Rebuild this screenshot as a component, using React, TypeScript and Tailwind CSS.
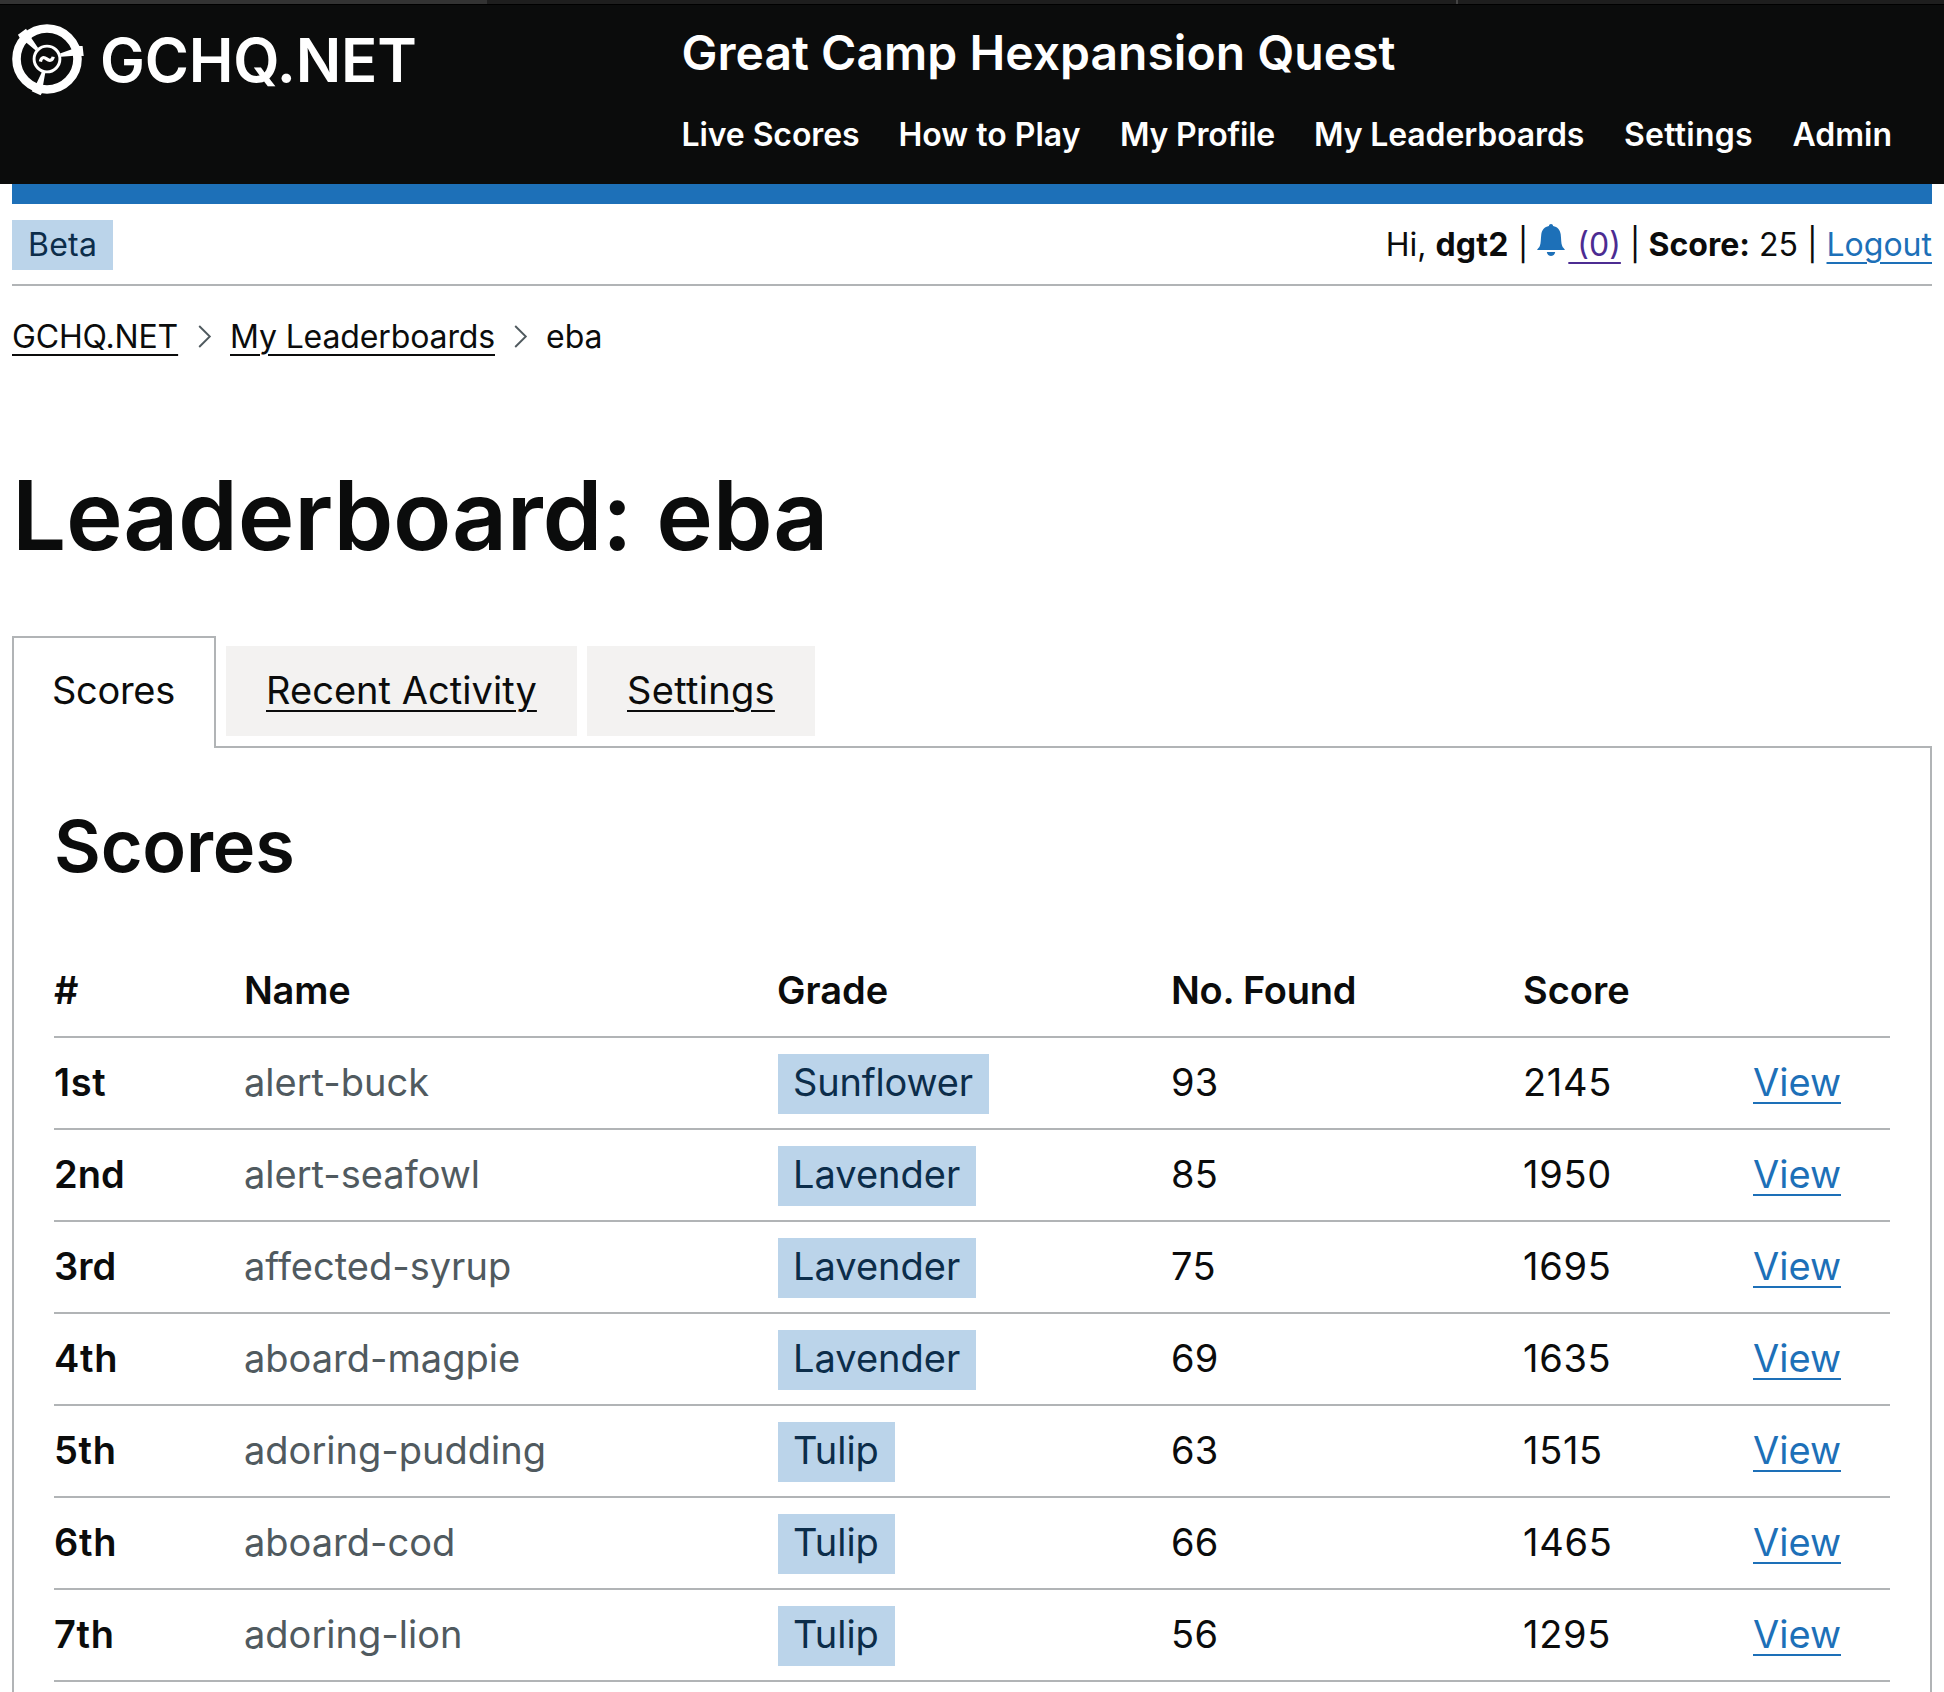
const nav = [
  ["Live Scores", "tracking-[-0.1px]"],
  ["How to Play", ""],
  ["My Profile", "tracking-[-0.2px]"],
  ["My Leaderboards", "tracking-[-0.13px]"],
  ["Settings", "tracking-[0.25px]"],
  ["Admin", ""],
];

const rows = [
  ["1st", "alert-buck", "Sunflower", "93", "2145"],
  ["2nd", "alert-seafowl", "Lavender", "85", "1950"],
  ["3rd", "affected-syrup", "Lavender", "75", "1695"],
  ["4th", "aboard-magpie", "Lavender", "69", "1635"],
  ["5th", "adoring-pudding", "Tulip", "63", "1515"],
  ["6th", "aboard-cod", "Tulip", "66", "1465"],
  ["7th", "adoring-lion", "Tulip", "56", "1295"],
];

const tagWidths: Record<string, string> = {
  Sunflower: "w-[211px] tracking-[-0.2px]",
  Lavender: "w-[198px]",
  Tulip: "w-[117px]",
};

const columns = "grid grid-cols-[190px_533px_394px_352px_230px_137px]";
const link = "underline decoration-2 underline-offset-[6px]";

function Logo() {
  const spoke = "13,-5.5 25.5,-10 31.5,-11.2 31.3,-13 35.6,-13 36.7,-3 27.5,-3.2 14,-2.2";
  return (
    <svg className="h-[74px] w-[74px] shrink-0" viewBox="-37 -37 74 74" fill="none">
      <circle r="30.5" stroke="#fff" strokeWidth="8.6" />
      <circle r="12.9" stroke="#fff" strokeWidth="2.9" />
      <g fill="#fff">
        <polygon points={spoke} />
        <polygon points={spoke} transform="rotate(120) scale(0.97)" />
        <polygon points={spoke} transform="rotate(240)" />
      </g>
      <path d="M-6.600 2.600C-5.800-2-3-2.200-.4-.1 2.200 2 5.400 2 6.200-2.200" stroke="#fff" strokeWidth="3.300" />
    </svg>
  );
}

function Bell() {
  return (
    <svg className="-mt-1 mr-[3px] inline-block h-8 w-7 align-baseline" viewBox="0 0 28 32" fill="#1d70b8">
      <path d="M14 0c1.2 0 2 .8 2.1 2 4.300 .8 7 3.800 7.600 8.300.600 4.800.300 9 1.500 11.700.700 1.700 2 2.600 2.800 4H0c.8-1.400 2.100-2.300 2.800-4 1.200-2.700.9-6.900 1.500-11.700C4.900 5.800 7.600 2.800 11.900 2 12 .8 12.800 0 14 0z" />
      <path d="M9.800 28h8.400c-.5 2.500-2 4-4.200 4s-3.700-1.500-4.200-4z" />
    </svg>
  );
}

function Chevron() {
  return (
    <svg className="mt-2 h-[23px] w-[14px] shrink-0" viewBox="0 0 14 23" fill="none" stroke="#505a5f" strokeWidth="1.900">
      <path d="M1.200 1l10.600 10.500L1.200 22" />
    </svg>
  );
}

export default function App() {
  return (
    <div className="h-[1692px] overflow-hidden bg-white font-['Inter',sans-serif] text-[38px] leading-[46px] text-[#0b0c0c]">
      <div className="flex h-[5px] border-b border-black bg-[#1e1e1e]">
        <div className="w-[487px] bg-[#333333]" />
        <div className="ml-[969px] w-[2px] bg-[#444444]" />
      </div>
      <header className="flex h-[179px] bg-[#0b0c0c] font-semibold text-white">
        <div className="flex w-[681.5px] items-start pt-[17px] pl-[10px]">
          <Logo />
          <span className="mt-[2px] ml-[16px] text-[60px] leading-[73px] tracking-[-0.2px]">GCHQ.NET</span>
        </div>
        <div className="pt-[18px]">
          <div className="text-[48px] leading-[59px] tracking-[0.03px]">Great Camp Hexpansion Quest</div>
          <nav className="mt-[33px] grid grid-cols-[217px_221.5px_194px_310px_168.5px_100px] text-[32px] leading-[39px] whitespace-nowrap">
            {nav.map(([label, tracking]) => (
              <a key={label} className={tracking}>{label}</a>
            ))}
          </nav>
        </div>
      </header>
      <div className="mx-3">
        <div className="h-5 bg-[#1d70b8]" />
        <div className="flex h-[82px] items-start justify-between border-b-2 border-[#b1b4b6] pt-4 text-[32px] leading-[39px]">
          <span className="h-[50px] w-[101px] bg-[#bbd4ea] pt-[5px] pl-4 tracking-[0.25px] text-[#0c2d4a]">Beta</span>
          <div className="h-[50px] pt-[5px] whitespace-nowrap">
            Hi, <b className="font-bold tracking-[0.25px]">dgt2</b> | <Bell />
            <a className={`${link} whitespace-pre text-[#4c2c92]`}>{" (0)"}</a> | <b className="-ml-px font-bold">Score:</b> 25 |{" "}
            <a className={`${link} text-[#1d70b8]`}>Logout</a>
          </div>
        </div>
        <div className="mt-[31px] flex text-[32px] leading-[39px]">
          <a className={`${link} w-[186px] tracking-[-0.15px]`}>GCHQ.NET</a>
          <Chevron />
          <a className={`${link} ml-[18px] w-[284px] tracking-[-0.13px]`}>My Leaderboards</a>
          <Chevron />
          <span className="ml-[18px]">eba</span>
        </div>
        <h1 className="mt-[101px] text-[96px] leading-[116px] font-semibold tracking-[-0.33px]">Leaderboard: eba</h1>
        <div className="mt-[63px] flex h-[110px] items-start">
          <div className="relative z-10 h-[112px] w-[204px] border-2 border-b-0 border-[#b1b4b6] bg-white pt-[29px] pl-[38px] tracking-[-0.3px]">Scores</div>
          <div className="mt-[10px] ml-[10px] h-[90px] w-[351px] bg-[#f3f2f1] pt-[21px] pl-10">
            <a className={`${link} tracking-[0.05px]`}>Recent Activity</a>
          </div>
          <div className="mt-[10px] ml-[10px] h-[90px] w-[228px] bg-[#f3f2f1] pt-[21px] pl-10">
            <a className={`${link} tracking-[0.3px]`}>Settings</a>
          </div>
        </div>
        <div className="h-[1000px] border-2 border-[#b1b4b6] px-10 pt-[54px]">
          <h2 className="text-[72px] leading-[87px] font-semibold tracking-[-0.2px]">Scores</h2>
          <div className={`${columns} mt-[57px] h-[92px] border-b-2 border-[#b1b4b6] pt-[21px] font-semibold`}>
            <span>#</span>
            <span className="tracking-[-0.25px]">Name</span>
            <span>Grade</span>
            <span className="tracking-[-0.25px]">No. Found</span>
            <span>Score</span>
          </div>
          {rows.map(([rank, name, grade, found, score]) => (
            <div key={rank} className={`${columns} h-[92px] border-b-2 border-[#b1b4b6] pt-[21px]`}>
              <span className={rank.endsWith("d") ? "font-semibold" : "font-semibold tracking-[0.7px]"}>{rank}</span>
              <span className="text-[#505a5f]">{name}</span>
              <span>
                <span className={`-mt-[5px] ml-px block h-[60px] bg-[#bbd4ea] pt-[5px] pl-[15px] text-[#0c2d4a] ${tagWidths[grade]}`}>{grade}</span>
              </span>
              <span className="tracking-[0.3px]">{found}</span>
              <span className="tracking-[0.7px]">{score}</span>
              <a className={`${link} text-[#1d70b8]`}>View</a>
            </div>
          ))}
        </div>
      </div>
    </div>
  );
}
